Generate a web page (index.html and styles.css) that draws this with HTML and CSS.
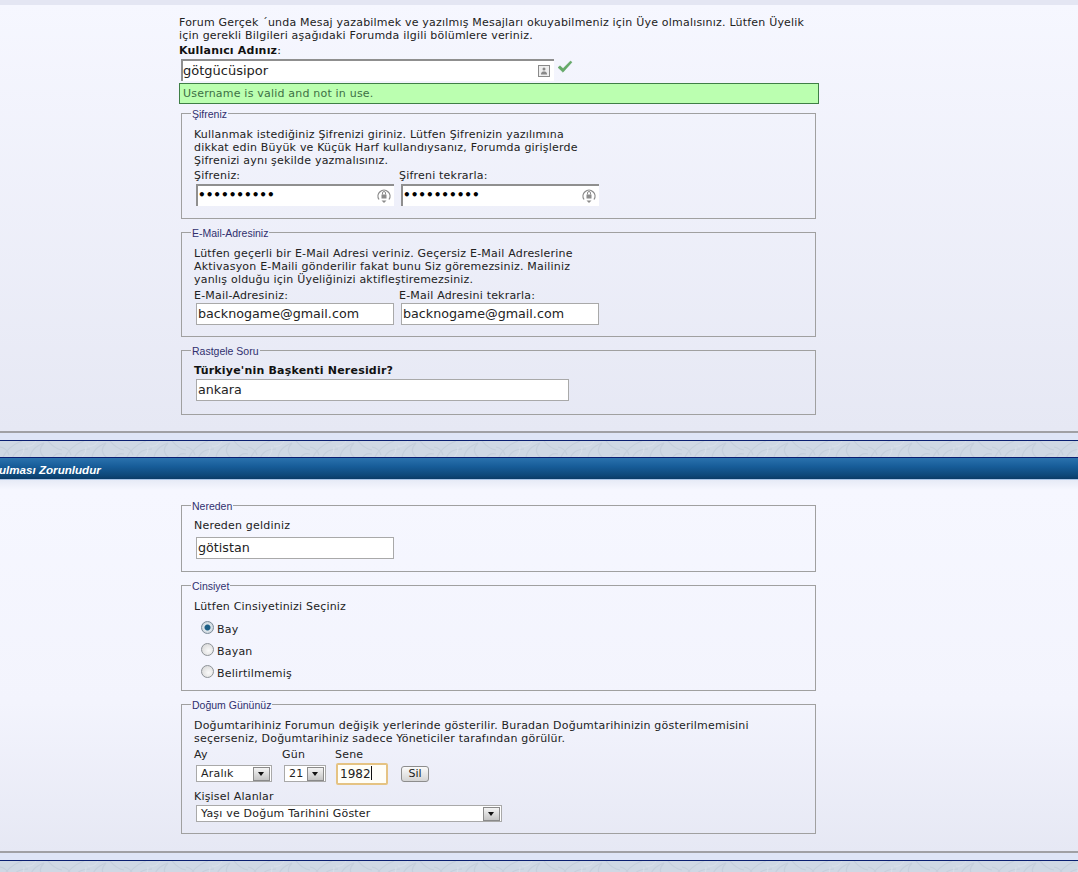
FILE: index.html
```html
<!DOCTYPE html>
<html lang="tr">
<head>
<meta charset="utf-8">
<title>Kayıt</title>
<link rel="stylesheet" href="styles.css">
</head>
<body>
<svg class="defs" width="0" height="0" aria-hidden="true">
  <defs>
    <pattern id="swirl" width="62" height="18" patternUnits="userSpaceOnUse">
      <rect width="62" height="18" fill="#cfd8e4"/>
      <path d="M2 18C6 8 14 3 22 0M12 18C14 11 20 8 28 8M30 18C30 10 36 5 44 2C38 8 40 13 46 18M48 0C52 5 56 8 62 9M0 6C5 7 8 10 9 14M52 18C54 13 57 12 62 13" fill="none" stroke="#c5cfdc" stroke-width="1.2"/>
      <path d="M18 18C22 14 24 12 24 6M36 0C34 4 30 6 26 5" fill="none" stroke="#d9e0ea" stroke-width="1"/>
    </pattern>
  </defs>
</svg>

<div class="top-strip"></div>
<main class="panel panel-first">
  <div class="content">
    <p class="intro">Forum Gerçek ´unda Mesaj yazabilmek ve yazılmış Mesajları okuyabilmeniz için Üye olmalısınız. Lütfen Üyelik<br>için gerekli Bilgileri aşağıdaki Forumda ilgili bölümlere veriniz.</p>
    <div class="strong-label"><b>Kullanıcı Adınız</b>:</div>
    <div class="user-row">
      <div class="field field-sunken field-user">
        <input class="field-input" type="text" value="götgücüsipor" aria-label="Kullanıcı Adınız">
        <svg class="field-icon icon-user" width="14" height="14" viewBox="0 0 14 14"><rect x="1.500" y="1.500" width="11" height="11" fill="#eee" stroke="#8a8a8a"/><circle cx="7" cy="5" r="1.500" fill="#888"/><path d="M4 10.500h6V9.300C9.500 8 8 7.600 7 7.600S4.500 8 4 9.300z" fill="#888"/></svg>
      </div>
      <svg class="check" width="16" height="14" viewBox="0 0 16 14"><path d="M1 7.500 3 5.800 6 8.600 13.500 1 15 2.200 6 12.300z" fill="#66ab68" stroke="#4f9455" stroke-width=".4"/></svg>
    </div>
    <div class="valid">Username is valid and not in use.</div>

    <fieldset class="group group-pass">
      <legend>Şifreniz</legend>
      <p class="help">Kullanmak istediğiniz Şifrenizi giriniz. Lütfen Şifrenizin yazılımına<br>dikkat edin Büyük ve Küçük Harf kullandıysanız, Forumda girişlerde<br>Şifrenizi aynı şekilde yazmalısınız.</p>
      <div class="pair">
        <label class="pair-item">Şifreniz:
          <span class="field field-sunken field-pair">
            <input class="field-input field-pass" type="password" value="1234567890">
            <svg class="field-icon" width="16" height="16" viewBox="0 0 16 16"><path d="M3 11.500A6 6 0 1 1 13 11.500" fill="none" stroke="#8c8c8c" stroke-width="1.300"/><path d="M8 15l-2.500-2.500h5z" fill="#8c8c8c"/><rect x="5.500" y="6.500" width="5" height="4" fill="#8c8c8c"/><path d="M6.500 6.500V5a1.500 1.500 0 0 1 3 0v1.500" fill="none" stroke="#8c8c8c"/></svg>
          </span>
        </label>
        <label class="pair-item">Şifreni tekrarla:
          <span class="field field-sunken field-pair">
            <input class="field-input field-pass" type="password" value="1234567890">
            <svg class="field-icon" width="16" height="16" viewBox="0 0 16 16"><path d="M3 11.500A6 6 0 1 1 13 11.500" fill="none" stroke="#8c8c8c" stroke-width="1.300"/><path d="M8 15l-2.500-2.500h5z" fill="#8c8c8c"/><rect x="5.500" y="6.500" width="5" height="4" fill="#8c8c8c"/><path d="M6.500 6.500V5a1.500 1.500 0 0 1 3 0v1.500" fill="none" stroke="#8c8c8c"/></svg>
          </span>
        </label>
      </div>
    </fieldset>

    <fieldset class="group group-mail">
      <legend>E-Mail-Adresiniz</legend>
      <p class="help">Lütfen geçerli bir E-Mail Adresi veriniz. Geçersiz E-Mail Adreslerine<br>Aktivasyon E-Maili gönderilir fakat bunu Siz göremezsiniz. Mailiniz<br>yanlış olduğu için Üyeliğinizi aktifleştiremezsiniz.</p>
      <div class="pair pair-mail">
        <label class="pair-item">E-Mail-Adresiniz:
          <input class="plain plain-pair" type="text" value="backnogame@gmail.com">
        </label>
        <label class="pair-item">E-Mail Adresini tekrarla:
          <input class="plain plain-pair" type="text" value="backnogame@gmail.com">
        </label>
      </div>
    </fieldset>

    <fieldset class="group group-question">
      <legend>Rastgele Soru</legend>
      <div class="strong-label"><b>Türkiye'nin Başkenti Neresidir?</b></div>
      <input class="plain plain-wide" type="text" value="ankara" aria-label="Rastgele Soru">
    </fieldset>
  </div>
</main>

<div class="band">
  <svg class="swirl" width="100%" height="100%" aria-hidden="true"><rect width="100%" height="100%" fill="url(#swirl)"/></svg>
</div>
<h2 class="title-bar"><span class="title-text">ulması Zorunludur</span></h2>

<section class="panel panel-second">
  <div class="content">
    <fieldset class="group group-from">
      <legend>Nereden</legend>
      <div class="line-label">Nereden geldiniz</div>
      <input class="plain plain-pair" type="text" value="götistan" aria-label="Nereden geldiniz">
    </fieldset>

    <fieldset class="group group-gender">
      <legend>Cinsiyet</legend>
      <div class="line-label">Lütfen Cinsiyetinizi Seçiniz</div>
      <div class="radio-row"><span class="radio radio-on"></span>Bay</div>
      <div class="radio-row"><span class="radio"></span>Bayan</div>
      <div class="radio-row"><span class="radio"></span>Belirtilmemiş</div>
    </fieldset>

    <fieldset class="group group-birth">
      <legend>Doğum Gününüz</legend>
      <p class="help">Doğumtarihiniz Forumun değişik yerlerinde gösterilir. Buradan Doğumtarihinizin gösterilmemisini<br>seçerseniz, Doğumtarihiniz sadece Yöneticiler tarafından görülür.</p>
      <div class="date-row">
        <div class="date-col">Ay
          <span class="select select-month"><span class="select-text">Aralık</span><span class="arrow"></span></span>
        </div>
        <div class="date-col">Gün
          <span class="select select-day"><span class="select-text">21</span><span class="arrow"></span></span>
        </div>
        <div class="date-col">Sene
          <span class="year">1982<span class="caret"></span></span>
        </div>
        <button class="del" type="button">Sil</button>
      </div>
      <div class="line-label line-tight">Kişisel Alanlar</div>
      <span class="select select-wide"><span class="select-text">Yaşı ve Doğum Tarihini Göster</span><span class="arrow"></span></span>
    </fieldset>
  </div>
</section>

<div class="band band-last">
  <svg class="swirl" width="100%" height="100%" aria-hidden="true"><rect width="100%" height="100%" fill="url(#swirl)"/></svg>
</div>
</body>
</html>
```

FILE: styles.css
```css
* { box-sizing: border-box; }
html, body { margin: 0; padding: 0; height: 872px; overflow: hidden; }
body {
  background: #dfe5f6;
  font-family: "DejaVu Sans", Verdana, sans-serif;
  font-size: 11px;
  letter-spacing: .2px;
  color: #222;
}
.defs { position: absolute; }
.top-strip { height: 5px; background: #e4e6f3; }

.panel {
  background: linear-gradient(#f6f7ff, #e6e8f4);
  border-bottom: 2px solid #a0a0a4;
}
.panel-first { height: 428px; padding-top: 11px; }
.panel-second { height: 373px; padding-top: 18px; background: linear-gradient(#e6eaf6 0, #f6f7ff 10px, #f3f4fd 60%, #e6e8f4); }

.content { margin-left: 179px; width: 640px; }
.intro { margin: 0; line-height: 13px; white-space: nowrap; }
.strong-label { line-height: 13px; margin-top: 2px; color: #111; }

.user-row { display: flex; align-items: flex-start; margin: 2px 0 0 2px; height: 22px; }
.check { margin: 1px 0 0 3px; }

.field {
  position: relative;
  display: flex;
  align-items: center;
  background: #fff;
  border-top: 2px solid #8f8f8f;
  border-left: 2px solid #8f8f8f;
}
.field-user { width: 373px; height: 22px; }
.field-pair { width: 198px; height: 22px; margin: 2px 0 0 2px; }
.field-input {
  flex: 1;
  min-width: 0;
  border: 0;
  padding: 0 0 2px 0;
  background: transparent;
  font: 13px "DejaVu Sans", Verdana, sans-serif;
  color: #222;
  outline: none;
}
.field-pass { color: #000; font-size: 12px; font-weight: bold; }
.field-icon { flex: none; margin: 0 2px 0 0; }
.icon-user { margin-right: 3px; }

.valid {
  margin-top: 2px;
  height: 21px;
  width: 640px;
  background: #bbffb0;
  border: 1px solid #3f7f46;
  padding-left: 3px;
  line-height: 19px;
  color: #3d6f45;
}

.group {
  display: block;
  margin: 0 3px 0 2px;
  padding: 0 12px;
  border: 1px solid #a0a0a0;
  width: 635px;
  min-width: 0;
}
.group + .group { margin-top: 6px; }
.valid + .group { margin-top: 2px; }
.group legend {
  padding: 2px 1px 0;
  margin-left: -3px;
  font-family: "Liberation Sans", Arial, sans-serif;
  font-size: 10.500px;
  line-height: 12px;
  letter-spacing: 0;
  color: #30306e;
}

.group-pass { height: 113px; padding-top: 8px; }
.group-mail { height: 112px; padding-top: 8px; }
.group-question { height: 72px; padding-top: 5px; }
.group-from { height: 74px; padding-top: 1px; }
.group-gender { height: 113px; padding-top: 1px; }
.group-birth { height: 137px; padding-top: 8px; }

.help { margin: 0; line-height: 13px; white-space: nowrap; }
.pair { display: flex; gap: 7px; margin-top: 2px; }
.pair-mail { margin-top: 3px; }
.pair-item { display: block; width: 198px; line-height: 13px; }

.plain {
  display: block;
  height: 22px;
  border: 1px solid #a9a9a9;
  background: #fff;
  margin: 2px 0 0 2px;
  padding: 0 0 1px 1px;
  font: 12.700px "DejaVu Sans", Verdana, sans-serif;
  color: #222;
  outline: none;
}
.plain-pair { width: 198px; }
.plain-wide { width: 373px; margin-top: 2px; }
.pair .plain-pair { margin-top: 1px; }
.pair-item .field-pair { display: flex; }

.line-label { line-height: 13px; margin-top: 6px; }
.group-from .plain { margin-top: 5px; }
.group-gender .line-label { margin-top: 7px; margin-bottom: 5px; }
.line-tight { margin-top: 5px; }

.radio-row { display: flex; align-items: center; height: 22px; padding-left: 7px; }
.radio {
  width: 13px;
  height: 13px;
  margin-right: 3px;
  margin-top: -4px;
  border-radius: 50%;
  border: 1px solid #8d9297;
  background: radial-gradient(circle at 60% 60%, #fafafa, #d2d2d2);
}
.radio-on { background: radial-gradient(circle, #1d5f86 0 2.500px, #dfe7ec 3.500px, #b9c4cc); border-color: #7c8c99; }

.date-row { display: flex; align-items: flex-start; margin-top: 3px; }
.date-col { display: block; line-height: 13px; }
.date-col:nth-child(1) { width: 88px; }
.date-col:nth-child(2) { width: 53px; }
.date-col:nth-child(3) { width: 65px; }

.select {
  display: flex;
  align-items: center;
  justify-content: space-between;
  height: 17px;
  margin: 4px 0 0 2px;
  padding: 0 1px 0 4px;
  border: 1px solid #a9a9a9;
  background: #fff;
  line-height: 15px;
}
.select-month { width: 76px; }
.select-day { width: 42px; }
.select-wide { width: 306px; margin-top: 2px; }
.select-text { color: #222; }
.arrow {
  position: relative;
  width: 17px;
  height: 14px;
  flex: none;
  border: 1px solid #8a8a8a;
  background: linear-gradient(#f4f4f4, #c4c4c4);
}
.arrow::after {
  content: "";
  position: absolute;
  left: 4px;
  top: 4px;
  border-left: 3.500px solid transparent;
  border-right: 3.500px solid transparent;
  border-top: 4px solid #111;
}
.year {
  display: block;
  width: 52px;
  height: 22px;
  margin: 2px 0 0 1px;
  padding-left: 2px;
  border: 2px solid #e5c383;
  background: #fffef8;
  border-radius: 2px;
  font-size: 12px;
  line-height: 18px;
  letter-spacing: 0;
  color: #222;
}
.caret { display: inline-block; width: 1px; height: 14px; background: #111; vertical-align: -2px; }
.del {
  margin: 18px 0 0 1px;
  width: 28px;
  height: 16px;
  padding: 0;
  border: 1px solid #8d8d8d;
  border-radius: 3px;
  background: linear-gradient(#fafafa, #d4d4d4);
  font: 11px "DejaVu Sans", Verdana, sans-serif;
  line-height: 14px;
  color: #222;
}

.band { height: 18px; margin-top: 7px; border-top: 1px solid #0a1f72; border-bottom: 1px solid #0a1f72; overflow: hidden; }
.swirl { display: block; }
.band-last { height: 30px; border-bottom: 0; }

.title-bar {
  margin: 0;
  height: 22px;
  background: linear-gradient(#2a72ad 0, #175d99 40%, #0d4677 85%, #0a3b66);
  border-bottom: 1px solid #a9c4e6;
  font: italic bold 11.600px/23px "Liberation Sans", Arial, sans-serif;
  letter-spacing: 0;
  color: #fff;
  overflow: hidden;
}
.title-text { display: block; margin-left: -1px; }
```
